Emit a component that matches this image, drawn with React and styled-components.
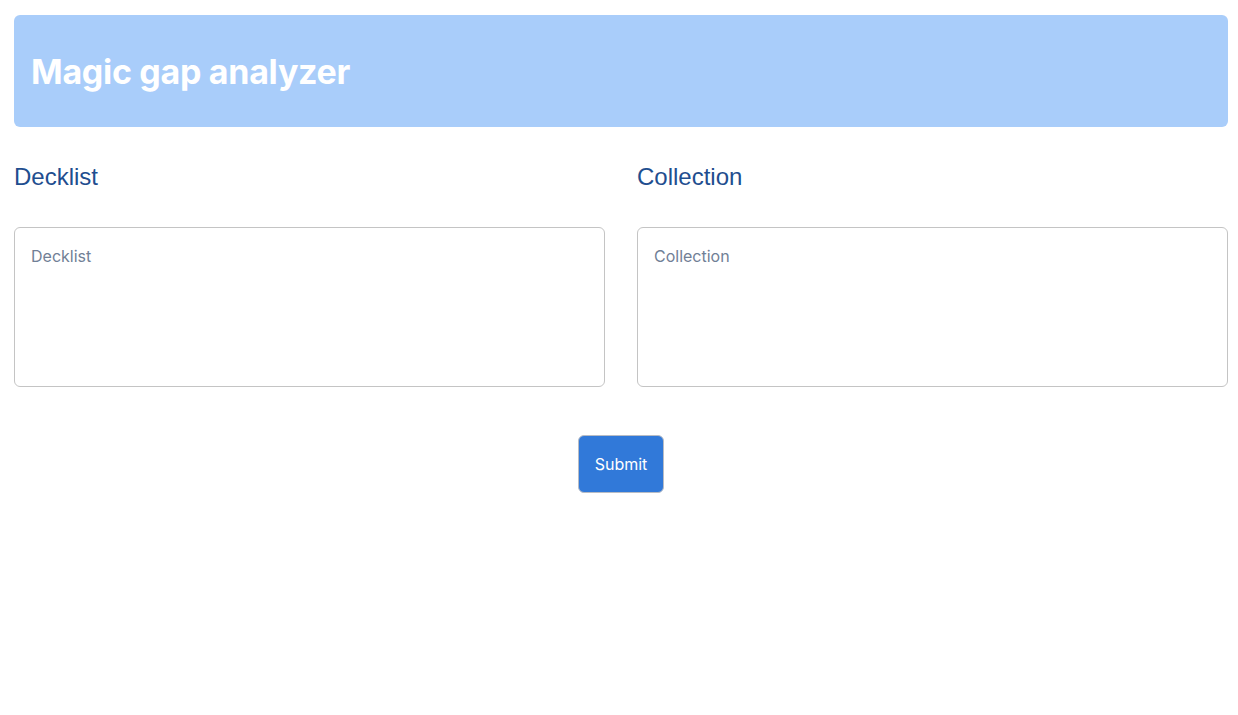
import styled, { createGlobalStyle } from "styled-components";

const GlobalStyle = createGlobalStyle`
  body {
    margin: 0;
    background: #ffffff;
    font-family: Inter, "Liberation Sans", sans-serif;
  }
`;

const App = () => {
  return (
    <>
      <GlobalStyle />
      <Page>
        <Header>
          <Title>Magic gap analyzer</Title>
        </Header>
        <Columns>
          <Column>
            <Heading>Decklist</Heading>
            <TextBox placeholder="Decklist" />
          </Column>
          <Column>
            <Heading>Collection</Heading>
            <TextBox placeholder="Collection" />
          </Column>
        </Columns>
        <Actions>
          <SubmitButton>Submit</SubmitButton>
        </Actions>
      </Page>
    </>
  );
};

const Page = styled.div`
  padding: 15px 10px 0 14px;
`;

const Header = styled.header`
  background-color: #a9cdfa;
  border-radius: 6px;
  height: 112px;
  padding: 0 17px;
  display: flex;
  align-items: center;
  box-sizing: border-box;
`;

const Title = styled.h1`
  margin: 0;
  color: #ffffff;
  font-family: Inter, sans-serif;
  font-weight: 700;
  font-size: 34px;
  letter-spacing: -0.3px;
`;

const Columns = styled.div`
  display: grid;
  grid-template-columns: 1fr 1fr;
  gap: 32px;
  margin-top: 35px;
`;

const Column = styled.div`
  display: flex;
  flex-direction: column;
`;

const Heading = styled.h2`
  margin: 0;
  font-family: "Liberation Sans", Arial, sans-serif;
  font-weight: 400;
  font-size: 24px;
  line-height: 30px;
  color: #1f4e8f;
`;

const TextBox = styled.textarea`
  margin-top: 35px;
  height: 160px;
  box-sizing: border-box;
  border: 1px solid #c4c4c4;
  border-radius: 6px;
  padding: 18px 16px;
  font-family: Inter, sans-serif;
  font-size: 16px;
  resize: none;
  outline: none;
  &::placeholder {
    color: #718096;
  }
`;

const Actions = styled.div`
  display: flex;
  justify-content: center;
  margin-top: 48px;
`;

const SubmitButton = styled.button`
  width: 86px;
  height: 58px;
  background-color: #3179d9;
  color: #ffffff;
  border: 1px solid #b8bcc4;
  border-radius: 6px;
  font-family: Inter, sans-serif;
  font-size: 16px;
  cursor: pointer;
`;

export default App;
